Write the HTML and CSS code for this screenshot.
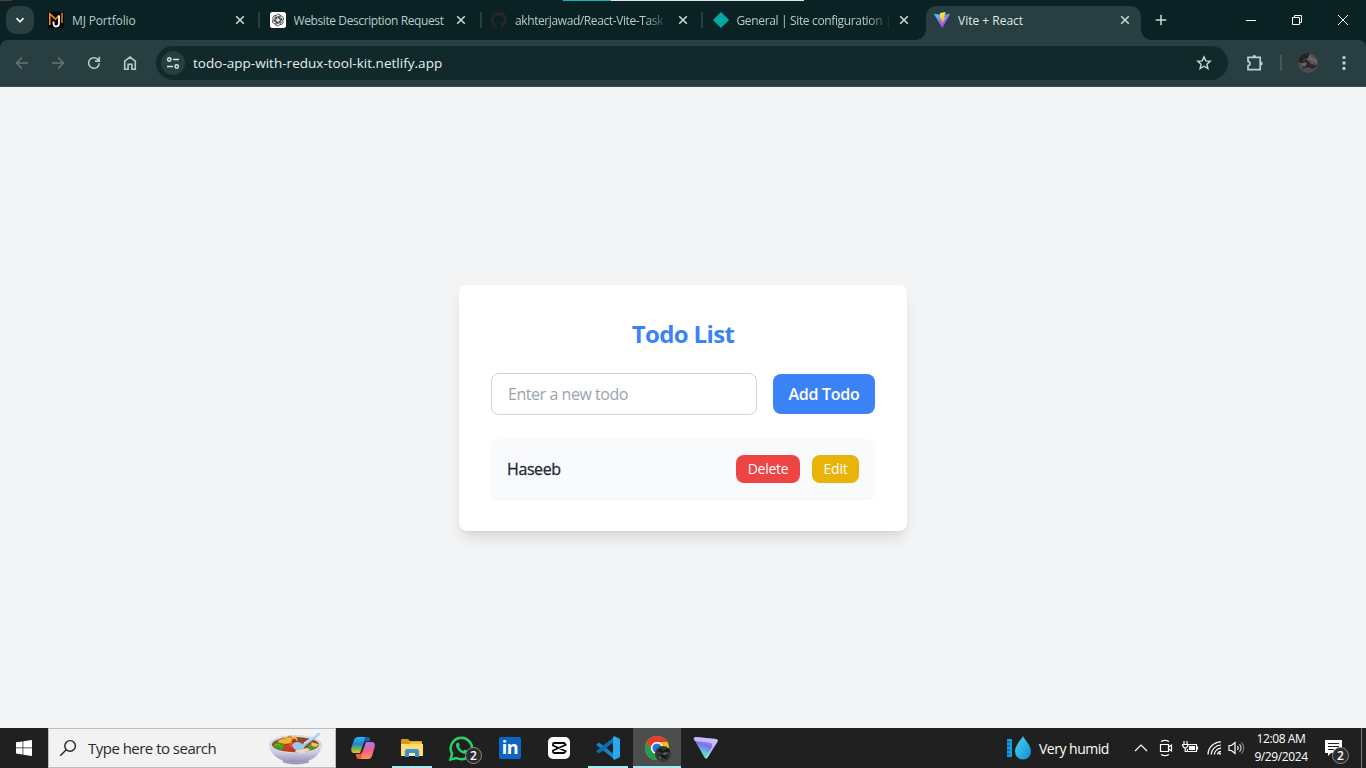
FILE: index.html
```html
<!DOCTYPE html>
<html lang="en">
<head>
<meta charset="utf-8">
<title>Vite + React</title>
<link rel="stylesheet" href="styles.css">
</head>
<body>
<div class="screen">
  <header class="tabstrip">
    <div class="edge-marks"><i class="edge-red"></i><i class="edge-cyan"></i><i class="edge-white"></i></div>
    <div class="tab-search"><svg width="28" height="28" viewBox="0 0 28 28"><path d="M10.500 12.200l3.500 3.600 3.500-3.600" fill="none" stroke="#e4eeee" stroke-width="1.800"/></svg></div>
    <div class="tabs">
      <div class="tab">
        <svg class="favicon" viewBox="0 0 16 16"><rect width="16" height="16" fill="#050606"/><path d="M1.800 13V1.800l5.700 5.400L11 3.500" fill="none" stroke="#ed8b1c" stroke-width="1.600"/><path d="M14 .8v10.200" fill="none" stroke="#ed8b1c" stroke-width="1.400"/><path d="M11 3.500v7.700c0 4.300-5.400 4.300-5.500.4V9.500" fill="none" stroke="#fff" stroke-width="1.800"/></svg>
        <span class="tab-title t-mj">MJ Portfolio</span>
        <svg class="close" viewBox="0 0 10 10"><path d="M1.200 1.200l7.600 7.600M8.800 1.200L1.200 8.800"/></svg>
      </div>
      <div class="tab">
        <svg class="favicon" viewBox="0 0 16 16"><rect width="16" height="16" rx="2.500" fill="#fff"/><g fill="none" stroke="#303638" stroke-width=".8"><path id="petal" d="M5.900 9.200V4.600c0-2.900 4.300-3.300 5-.5M5.900 5.800l3.700-2.200"/><use href="#petal" transform="rotate(60 8 8)"/><use href="#petal" transform="rotate(120 8 8)"/><use href="#petal" transform="rotate(180 8 8)"/><use href="#petal" transform="rotate(240 8 8)"/><use href="#petal" transform="rotate(300 8 8)"/></g></svg>
        <span class="tab-title t-web">Website Description Request</span>
        <svg class="close" viewBox="0 0 10 10"><path d="M1.200 1.200l7.600 7.600M8.800 1.200L1.200 8.800"/></svg>
      </div>
      <div class="tab">
        <svg class="favicon" viewBox="0 0 16 16"><path fill="#27262c" d="M8 0a8 8 0 0 0-2.500 15.600c.4.1.5-.2.5-.4v-1.500c-2.200.5-2.700-.9-2.700-.9-.4-.9-.9-1.200-.9-1.200-.7-.5.1-.5.1-.5.8.1 1.200.8 1.200.8.7 1.300 1.900.9 2.300.7.1-.5.3-.9.5-1.100-1.800-.2-3.600-.9-3.600-4 0-.9.3-1.600.8-2.100-.1-.2-.4-1 .1-2.100 0 0 .7-.2 2.200.8a7.600 7.600 0 0 1 4 0c1.500-1 2.200-.8 2.200-.8.4 1.100.2 1.900.1 2.100.5.6.8 1.300.8 2.100 0 3.100-1.900 3.700-3.600 3.900.3.300.5.800.5 1.500v2.300c0 .2.1.5.6.4A8 8 0 0 0 8 0z"/></svg>
        <span class="tab-title faded t-git">akhterjawad/React-Vite-Task</span>
        <svg class="close" viewBox="0 0 10 10"><path d="M1.200 1.200l7.600 7.600M8.800 1.200L1.200 8.800"/></svg>
      </div>
      <div class="tab last">
        <svg class="favicon" viewBox="0 0 16 16"><path d="M8 .2L15.800 8 8 15.800.2 8z" fill="#05a6a3" stroke="#05a6a3" stroke-width=".5" stroke-linejoin="round"/></svg>
        <span class="tab-title faded t-gen">General | Site configuration |</span>
        <svg class="close" viewBox="0 0 10 10"><path d="M1.200 1.200l7.600 7.600M8.800 1.200L1.200 8.800"/></svg>
      </div>
      <div class="tab active">
        <svg class="favicon" viewBox="0 0 16 16"><defs><linearGradient id="va" x1="0" y1="0" x2=".6" y2="1"><stop stop-color="#41d1ff"/><stop offset="1" stop-color="#bd34fe"/></linearGradient><linearGradient id="vb" x1=".4" y1="0" x2=".6" y2="1"><stop stop-color="#ffea57"/><stop offset="1" stop-color="#ffa800"/></linearGradient></defs><path d="M.2 2L8 3.200 15.800 2 8.300 15.500z" fill="url(#va)" stroke="url(#va)" stroke-width=".5" stroke-linejoin="round"/><path d="M11.600.1L6.200 1.100l-.4 5.600 1.800-.3-.5 2.400 1.300-.4-.7 3.600 4-6.400-1.900.4z" fill="url(#vb)"/></svg>
        <span class="tab-title t-vite">Vite + React</span>
        <svg class="close" viewBox="0 0 10 10"><path d="M1.200 1.200l7.600 7.600M8.800 1.200L1.200 8.800"/></svg>
      </div>
    </div>
    <svg class="new-tab" viewBox="0 0 12 12"><path d="M6 .7v10.600M.7 6h10.600" stroke="#c5dddd" stroke-width="1.500"/></svg>
    <div class="window-controls">
      <svg viewBox="0 0 46 40"><path d="M18 20.500h10" /></svg>
      <svg viewBox="0 0 46 40"><path d="M18.500 17.500h7v7h-7zM20.500 17.500v-2h7v7h-2" /></svg>
      <svg viewBox="0 0 46 40"><path d="M18 15l10 10M28 15l-10 10"/></svg>
    </div>
  </header>

  <nav class="toolbar">
    <svg class="tool dim" viewBox="0 0 16 16"><path d="M14 8H2.500M8 2.500L2.500 8 8 13.500"/></svg>
    <svg class="tool dim" viewBox="0 0 16 16"><path d="M2 8h11.500M8 2.500L13.500 8 8 13.500"/></svg>
    <svg class="tool" viewBox="0 0 16 16"><path d="M13.200 8.200A5.300 5.300 0 1 1 11.800 4.400L13 5.700M13.300 1.800v4.300H9"/></svg>
    <svg class="tool" viewBox="0 0 16 16"><path d="M2.700 14.200V6.200L8 2l5.300 4.200v8H9.900V9.200H6.100v5z"/></svg>
    <div class="omnibox">
      <span class="site-info"><svg width="14" height="14" viewBox="0 0 14 14"><g fill="none" stroke="#d6e5e5" stroke-width="1.500"><circle cx="3.300" cy="3.500" r="1.700"/><path d="M7 3.500h6M1 10.500h6"/><circle cx="10.700" cy="10.500" r="1.700"/></g></svg></span>
      <span class="url">todo-app-with-redux-tool-kit.netlify.app</span>
      <svg class="star" viewBox="0 0 16 16"><path d="M8 1.900l1.800 4 4.400.4-3.300 2.900 1 4.300L8 11.200l-3.900 2.300 1-4.300L1.800 6.300l4.400-.4z"/></svg>
    </div>
    <svg class="extension" viewBox="0 0 18 18"><path d="M2 3.400h12.200v12.200H2v-3.700c2.600-.4 2.600-4.200 0-4.600z"/><path class="nub" d="M6.400 3a1.900 1.900 0 0 1 3.800 0zM14.800 7.600a1.900 1.900 0 0 1 0 3.800z"/></svg>
    <i class="divider"></i>
    <svg class="avatar" viewBox="0 0 20 20"><defs><clipPath id="av"><circle cx="10" cy="10" r="10"/></clipPath></defs><g clip-path="url(#av)"><path fill="#514d4e" d="M0 0h20v20H0z"/><path fill="#242122" d="M0 0h12l-2 5-4 1-2 4-4-1z"/><path fill="#686362" d="M11 2l8 5v4l-7-4-3 1z"/><path fill="#292729" d="M4 9l4-3 5 5 6 2-4 3-6-2-4 2z"/><path fill="#686463" d="M3 11l4-2 2 2-3 3zM12 8l4 2-2 1z"/></g></svg>
    <svg class="menu" viewBox="0 0 4 16"><circle cx="2" cy="2.600" r="1.700"/><circle cx="2" cy="8" r="1.700"/><circle cx="2" cy="13.400" r="1.700"/></svg>
  </nav>

  <main class="page">
    <section class="card">
      <h1 class="heading">Todo List</h1>
      <form class="entry"><input class="field" type="text" placeholder="Enter a new todo"><button class="btn add" type="button">Add Todo</button></form>
      <div class="item"><span class="item-name">Haseeb</span><div class="actions"><button class="btn delete" type="button">Delete</button><button class="btn edit" type="button">Edit</button></div></div>
    </section>
  </main>

  <footer class="taskbar">
    <div class="start"><svg width="16" height="16" viewBox="0 0 16 16"><path fill="#fff" d="M0 2.300l6.600-.9v6.200H0zM7.300 1.300L16 .1v7.500H7.300zM0 8.300h6.600v6.200L0 13.600zM7.300 8.300H16v7.600l-8.700-1.200z"/></svg></div>
    <div class="search">
      <svg width="18" height="18" viewBox="0 0 18 18"><circle cx="11.100" cy="6.900" r="5.300" fill="none" stroke="#222" stroke-width="1.400"/><path d="M7.300 10.700L1.200 16.800" stroke="#222" stroke-width="1.400"/></svg>
      <span class="search-text">Type here to search</span>
      <svg class="bowl" width="56" height="36" viewBox="0 0 58 36"><defs><linearGradient id="bw" x2="0" y2="1"><stop stop-color="#dddbea"/><stop offset=".5" stop-color="#c8c7dd"/><stop offset="1" stop-color="#9291b3"/></linearGradient></defs><ellipse cx="29" cy="32" rx="14" ry="3" fill="#a2a1bd"/><path d="M1 14c1 11 11 19 28 19s26-8 27-19z" fill="url(#bw)"/><ellipse cx="28.500" cy="14" rx="27.500" ry="9.500" fill="#d9d8e9"/><ellipse cx="28.500" cy="14.500" rx="24.500" ry="7.800" fill="#8f4a2a"/><path d="M10 11q6-6 11-4l8-1 2 4-6 3-12 1z" fill="#f3b52b"/><path d="M12 10q3-4 6-1m2-2q4-3 5 1" fill="none" stroke="#a66a17"/><path d="M5 16l3-4 8 1 3 4-5 3-6-1z" fill="#4a981d"/><path d="M7 15l4-1 3 3" fill="none" stroke="#79bd32"/><circle cx="19" cy="18" r="3" fill="#d63a25"/><circle cx="25" cy="19" r="3" fill="#cf3325"/><circle cx="24" cy="15" r="2.600" fill="#e24b33"/><circle cx="27" cy="11" r="2.500" fill="#bf2b20"/><path d="M42 14l10 1-3 4-8 1z" fill="#4f9424"/><path d="M45 12l8 2-3 3-5-1z" fill="#f3c54b"/><path d="M29 20l12-2 3 2-9 3-7-1z" fill="#f2d9bf"/><path d="M25 15q2-4 7-3l5 2L51 2.500q3.500-.5 2.500 2L39 15.500l-3 4-6 1q-4-1-5-5.500z" fill="#98c8ea"/><path d="M37 13.500L52 3" stroke="#d0e8f8" stroke-width="1.500"/></svg>
    </div>
    <div class="apps">
      <div class="app"><svg width="24" height="24" viewBox="0 0 24 24"><defs><linearGradient id="c1" x2="0" y2="1"><stop stop-color="#27b7ed"/><stop offset=".45" stop-color="#2582cf"/><stop offset=".75" stop-color="#75b949"/><stop offset="1" stop-color="#f0c222"/></linearGradient><linearGradient id="c2" x2="0" y2="1"><stop stop-color="#b473e8"/><stop offset=".55" stop-color="#ee638b"/><stop offset="1" stop-color="#ff9a4a"/></linearGradient></defs><path d="M7 1h9c2 0 2.500 1.500 3.200 4H15c-1.500 0-2 1-2.500 2.500L9 17H3C0 17-.2 14 .6 11L3 4c.7-2 2-3 4-3z" fill="url(#c1)"/><path d="M14 1h2c2 0 2.600 2 3.200 4H15c-1.500 0-2 1-2.500 2.500z" fill="#1759c5"/><path d="M17 23H8c-2 0-2.500-2-3.200-5H9c1.500 0 2-1 2.500-2.500L15 6h6c3 0 3.200 3 2.400 6L21 20c-.7 2-2 3-4 3z" fill="url(#c2)"/><path d="M10 23H8c-2 0-2.600-3-3.200-5H9c1.500 0 2-1 2.500-2.500z" fill="#f05b3c"/></svg></div>
      <div class="app running"><svg width="22" height="22" viewBox="0 0 22 22"><path fill="#d69b19" d="M0 3q0-1 1-1h6l2 2h12v4H0z"/><path fill="#f3c13b" d="M9 5h12v3H9z"/><path fill="#ffdb70" d="M0 7h22v12H0z"/><path fill="#3b91d4" d="M4 20v-6q0-2 2-2h10q2 0 2 2v6h-4v-4H8v4z"/><path fill="#ffe8a0" d="M8 16h6v3H8z"/></svg></div>
      <div class="app"><svg width="25" height="25" viewBox="0 0 25 25"><path d="M1.500 23.500L3 17.700A10.700 10.700 0 1 1 7.400 22z" fill="none" stroke="#28d366" stroke-width="2.500"/><path d="M8 7c.5-.7 1.500-.7 1.800 0l1 2.300-1 1.400c1 2 2.500 3.300 4.500 4.200l1.400-1.500 2.500 1.200c.8.4.4 2-.5 2.700-2 1.300-5 .2-7.500-2.200S6 9 8 7z" fill="#28d366"/></svg><b class="count">2</b></div>
      <div class="app"><span class="linkedin">in</span></div>
      <div class="app"><svg width="22" height="22" viewBox="0 0 22 22"><rect width="22" height="22" rx="5" fill="#fff"/><path d="M17 8.500V7.200q0-1.200-1.200-1.200H6.200Q5 6 5 7.200v1.300l13.500 6M17 13.500v1.300q0 1.200-1.200 1.200H6.200Q5 16 5 14.800v-1.300l13.500-6" fill="none" stroke="#080808" stroke-width="1.800"/></svg></div>
      <div class="app running"><svg width="24" height="24" viewBox="0 0 24 24"><path d="M1 8l2-1.500L19 19l-1 4L.7 9.200Q.3 8.500 1 8z" fill="#1685c8"/><path d="M1 16l2 1.500L19 5l-1-4L.7 14.800Q.3 15.500 1 16z" fill="#0870b1"/><path d="M18 0l6 3v18l-6 3-1-2V2z" fill="#29a9ee"/></svg></div>
      <div class="app current"><svg width="24" height="24" viewBox="0 0 24 24"><circle cx="12" cy="12" r="12" fill="#fbc116"/><path d="M1.600 6A12 12 0 0 1 22.400 6H12a6 6 0 0 0-5.200 9z" fill="#e33b2e"/><path d="M1.600 6A12 12 0 0 0 12 24l5.200-9A6 6 0 0 1 6.800 15z" fill="#239b4c"/><circle cx="12" cy="12" r="6" fill="#fff"/><circle cx="12" cy="12" r="4.600" fill="#2775e5"/></svg><svg class="chrome-user" viewBox="0 0 16 16"><circle cx="8" cy="8" r="8" fill="#373738"/><path d="M2 5l4-3 2 3 5-3 2 3-5 3zM3 10l4-2 4 2 3-1-3 4-5-2-3 2z" fill="#171819"/><path d="M8 7l5-1-4 3zM3 11l3-1-1 3z" fill="#777"/></svg></div>
      <div class="app"><svg width="26" height="24" viewBox="0 0 26 24"><defs><linearGradient id="pv" x1=".8" y1="0" x2=".4" y2="1"><stop stop-color="#b8a5ff"/><stop offset=".45" stop-color="#7f70f0"/><stop offset=".8" stop-color="#5cd8cf"/><stop offset="1" stop-color="#5ce8c5"/></linearGradient></defs><path d="M1 3q-1-2 2-2l20 2q3 .5 1.500 3L14.500 21.500q-1.500 2-3 0z" fill="url(#pv)"/><path d="M1 2q1-1 2-1l20 2q2 1 1 3L14.500 21.500q-1.500 2-2 .5L19 11q1.500-4-3-4.500L2 5Q0 3 1 2z" fill="#d9cdff" opacity=".75"/></svg></div>
    </div>
    <div class="tray">
      <svg class="humid-icon" width="26" height="26" viewBox="0 0 26 26"><path d="M1 4h5v18H1z" fill="#169ce0"/><path d="M1 7h3M1 11h3M1 15h3M1 19h3" stroke="#07547f"/><defs><linearGradient id="dr" x2="1" y2="1"><stop stop-color="#57d3fa"/><stop offset="1" stop-color="#078fd2"/></linearGradient></defs><path d="M17 1c1 3 8 9 8 15.500a8 8 0 0 1-16 0C9 10 16 4 17 1z" fill="url(#dr)"/></svg>
      <span class="humid">Very humid</span>
      <svg class="chevron" width="14" height="10" viewBox="0 0 14 10"><path d="M1 8l6-6 6 6"/></svg>
      <svg class="cam" width="14" height="18" viewBox="0 0 14 18"><path d="M1.500 5.500h8v7h-8zM9.500 8l3-2v6l-3-2M2 2.500Q6 .3 10 2.500M2 15.500Q6 17.700 10 15.500"/></svg>
      <svg class="battery" width="18" height="16" viewBox="0 0 18 16"><path d="M7 4.500h8.500v7h-9V9M16.500 6.500v3M3 1v3M6 1v3M1.500 4.500h5.500v1q-1 2.500-2.800 2.500T1.500 5zM4.200 8v3.500h3"/><path class="solid" d="M8 6h6v4H8z"/></svg>
      <svg class="wifi" width="16" height="16" viewBox="0 0 16 16"><path d="M1 14.500A13 13 0 0 1 14 1.800M4.200 14.500A10 10 0 0 1 14 5M7.300 14.500A7 7 0 0 1 14 8.200M10.500 14.500a4 4 0 0 1 3.500-3.200"/><circle class="solid" cx="13" cy="13.800" r="1"/></svg>
      <svg class="volume" width="18" height="16" viewBox="0 0 18 16"><path d="M1 5.500h2.500l3.500-3v11l-3.500-3H1zM9.500 6q1.500 2 0 4"/><path d="M11.500 4.200q3 3.800 0 7.600" opacity=".75"/><path d="M13.500 2.300q4.500 5.700 0 11.400" opacity=".4"/></svg>
      <div class="clock"><span>12:08 AM</span><span class="date">9/29/2024</span></div>
      <div class="notices"><svg width="17" height="16" viewBox="0 0 17 16"><path fill="#fff" d="M0 0h17v13H6l-3 3v-3H0z"/><path d="M3 3.500h11M3 6.500h11M3 9.500h6" stroke="#222"/></svg><b class="count">2</b></div>
      <i class="show-desktop"></i>
    </div>
  </footer>
</div>
</body>
</html>
```
FILE: styles.css
```css
* { box-sizing: border-box; }
body { margin: 0; font-family: "Open Sans", "Noto Sans", sans-serif; overflow: hidden; }
svg { display: block; flex: none; }
button, input { font: inherit; margin: 0; }

.screen { width: 1366px; height: 768px; display: grid; grid-template-rows: 40px 47px 641px 40px; background: #0a2224; }

.tabstrip { position: relative; display: flex; background: #0a2224; padding-left: 6px; }
.edge-marks { position: absolute; inset: 0 0 auto 0; display: flex; height: 1px; }
.edge-red { width: 12px; background: #513c3e; }
.edge-cyan { width: 48px; margin-left: 551px; background: #13b3c1; }
.edge-white { width: 193px; background: #dce8e3; }
.tab-search { width: 28px; height: 28px; margin: 6px 6px 0 0; border-radius: 10px; background: #283e40; }
.tabs { display: flex; }
.tab { position: relative; width: 221.500px; height: 40px; padding: 0 17px 0 8px; display: flex; align-items: center; }
.tab::after { content: ""; position: absolute; right: 1.500px; top: 12px; width: 2px; height: 16px; background: #283e40; }
.tab.last::after, .tab.active::after { display: none; }
.tab.active { width: 215px; height: 34px; margin-top: 6px; padding: 0 11px 6px 8px; border-radius: 10px 10px 0 0; background: #283e40; }
.tab.active::before { content: ""; position: absolute; left: -10px; right: -10px; bottom: 0; height: 10px; background: radial-gradient(circle at 0 0, transparent 9.500px, #283e40 10px) left / 10px 10px no-repeat, radial-gradient(circle at 100% 0, transparent 9.500px, #283e40 10px) right / 10px 10px no-repeat; }
.favicon { width: 16px; height: 16px; margin-right: 8px; }
.tab-title { width: 154px; padding-top: 1px; overflow: hidden; white-space: nowrap; font-size: 12px; line-height: 18px; color: #b5cccc; }
.faded { -webkit-mask-image: linear-gradient(to right, #000 130px, transparent 154px); mask-image: linear-gradient(to right, #000 130px, transparent 154px); }
.active .tab-title { color: #dfe9e9; }
.close { width: 10px; height: 10px; margin-left: auto; }
.close path { stroke: #c5dada; stroke-width: 1.600; }
.t-mj { letter-spacing: -.15px; }
.t-web { letter-spacing: -.4px; }
.t-git { letter-spacing: -.4px; }
.t-gen { letter-spacing: -.35px; }
.new-tab { width: 12px; height: 12px; margin: 14px 0 0 14px; }
.window-controls { display: flex; margin-left: auto; }
.window-controls svg { width: 46px; height: 40px; fill: none; stroke: #fff; stroke-width: 1; }

.toolbar { display: flex; align-items: center; padding: 0 20px 1px 14px; background: linear-gradient(#283e40 46px, #3c4d4f 46px); border-radius: 8px 8px 0 0; }
.tool { width: 16px; height: 16px; margin-right: 20px; fill: none; stroke: #b5cccc; stroke-width: 1.600; }
.tool.dim { stroke: #647779; }
.omnibox { width: 1072px; height: 34px; margin-left: -2px; padding: 0 16px 0 5px; display: flex; align-items: center; border-radius: 17px; background: #12292b; }
.site-info { width: 24px; height: 24px; border-radius: 50%; display: grid; place-items: center; background: #283e40; }
.url { margin-left: 8px; font-size: 13.500px; line-height: 20px; color: #e7eeee; letter-spacing: .02px; white-space: nowrap; }
.star { width: 16px; height: 16px; margin-left: auto; fill: none; stroke: #c4d8d8; stroke-width: 1.400; }
.extension { width: 18px; height: 18px; margin-left: 18px; fill: none; stroke: #b7d0d1; stroke-width: 1.700; }
.nub { fill: #b7d0d1; stroke: none; }
.divider { width: 2px; height: 16px; margin-left: 16px; background: #435759; }
.avatar { width: 20px; height: 20px; margin-left: 16px; }
.menu { width: 4px; height: 16px; margin-left: auto; fill: #b7d0d1; }

.page { display: flex; align-items: center; justify-content: center; background: #f3f4f6; padding-top: 1px; }
.card { width: 448px; height: 246px; padding: 32px; border-radius: 8px; background: #fff; box-shadow: 0 10px 15px -3px rgba(0,0,0,.1), 0 4px 6px -4px rgba(0,0,0,.1); }
.heading { margin: 0 0 24px; font-size: 24px; line-height: 34px; height: 32px; font-weight: 700; text-align: center; color: #3b82f6; letter-spacing: -.65px; }
.entry { display: flex; align-items: center; justify-content: space-between; height: 42px; margin-bottom: 24px; }
.field { width: 266px; height: 42px; padding: 0 16px; border: 1px solid #d1d5db; border-radius: 8px; font-size: 16px; outline: none; letter-spacing: -.45px; }
.field::placeholder { color: #9ca3af; opacity: 1; }
.btn { border: 0; padding: 0; color: #fff; border-radius: 8px; white-space: nowrap; }
.add { width: 102px; height: 40px; background: #3b82f6; font-size: 16px; font-weight: 600; letter-spacing: -.3px; }
.item { height: 60px; padding: 16px; display: flex; align-items: center; justify-content: space-between; border-radius: 8px; background: #f9fafb; box-shadow: 0 1px 2px rgba(0,0,0,.05); }
.item-name { color: #1f2937; font-size: 16px; font-weight: 500; line-height: 24px; letter-spacing: -.4px; -webkit-text-stroke: .3px #1f2937; }
.actions { display: flex; gap: 12px; }
.delete, .edit { height: 28px; font-size: 14px; line-height: 20px; }
.delete { width: 64px; background: #ef4444; letter-spacing: -.3px; }
.edit { width: 47px; background: #eab308; letter-spacing: -.2px; }

.taskbar { display: flex; background: #202020; color: #fff; }
.start { width: 48px; display: grid; place-items: center; }
.search { width: 288px; border: 1px solid #bdbdbd; background: #f2f2f2; display: flex; align-items: center; padding: 0 11px 0 10px; }
.search-text { margin-left: 11px; font-size: 15px; color: #292929; white-space: nowrap; letter-spacing: -.52px; }
.bowl { margin-left: auto; }
.apps { display: flex; gap: 1px; margin-left: 3px; }
.app { position: relative; width: 48px; height: 40px; display: grid; place-items: center; }
.running::after, .current::after { content: ""; position: absolute; left: 4px; right: 4px; bottom: 0; height: 2px; background: #a5edf4; }
.current { background: #4c4e4e; }
.current::after { left: 0; right: 0; }
.count { position: absolute; width: 17px; height: 17px; border: 1px solid #8d8d8d; border-radius: 50%; background: #2c2c2c; color: #fff; font-size: 12px; line-height: 15px; font-weight: 600; text-align: center; }
.app .count { left: 28px; top: 19px; }
.linkedin { width: 22px; height: 22px; border-radius: 2px; background: #0a66c2; font-size: 18px; line-height: 20px; font-weight: 700; text-align: center; letter-spacing: -.5px; }
.chrome-user { position: absolute; left: 22px; top: 18px; width: 16px; height: 16px; }
.tray { position: relative; flex: 1; display: flex; align-items: center; padding-left: 276px; }
.tray > svg { fill: none; stroke: #fff; stroke-width: 1.200; }
.tray > .humid-icon { stroke: none; }
.tray .solid { fill: #fff; stroke: none; }
.humid { width: 71px; margin-left: 7px; font-size: 14px; white-space: nowrap; letter-spacing: -.5px; }
.chevron { margin-left: 24px; }
.cam { margin-left: 11px; }
.battery { margin-left: 8px; }
.wifi { margin-left: 8px; }
.volume { margin-left: 5px; }
.clock { width: 70px; display: flex; flex-direction: column; align-items: center; font-size: 12px; line-height: 18px; margin-top: -1px; white-space: nowrap; letter-spacing: -.4px; }
.notices { position: relative; width: 17px; height: 16px; margin-left: 9px; }
.notices .count { left: 7px; top: 7px; }
.show-desktop { width: 1px; height: 40px; margin-left: auto; margin-right: 4px; background: #777; }
```
